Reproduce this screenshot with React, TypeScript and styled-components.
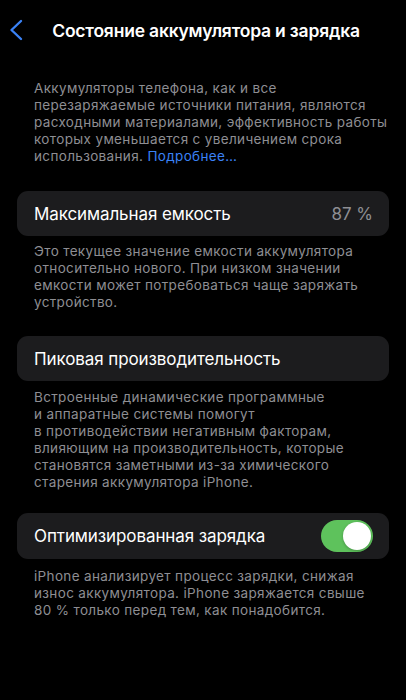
import styled, { createGlobalStyle } from "styled-components";

const GlobalStyle = createGlobalStyle`
  html, body {
    margin: 0;
    padding: 0;
    background: #000;
  }
  body {
    font-family: Inter, "Noto Sans", "DejaVu Sans", sans-serif;
    -webkit-font-smoothing: antialiased;
  }
`;

const Screen = styled.div`
  width: 406px;
  min-height: 700px;
  background: #000;
  color: #fff;
  display: flex;
  flex-direction: column;
`;

const NavBar = styled.header`
  display: grid;
  grid-template-columns: 50px 1fr 44px;
  align-items: center;
  height: 60px;
`;

const BackButton = styled.button`
  display: flex;
  align-items: center;
  justify-content: flex-start;
  padding: 0 0 0 9px;
  background: none;
  border: 0;
  height: 44px;
  cursor: pointer;
`;

const NavTitle = styled.h1`
  margin: 0;
  text-align: center;
  font-size: 17.5px;
  font-weight: 600;
  letter-spacing: -0.2px;
  color: #fff;
  white-space: nowrap;
`;

const Content = styled.main`
  display: flex;
  flex-direction: column;
  padding: 0 17px;
`;

const Note = styled.p<{ $top: number; $bottom: number }>`
  margin: ${(p) => p.$top}px 0 ${(p) => p.$bottom}px;
  padding: 0 17px;
  font-size: 13.5px;
  line-height: 17px;
  color: #8e8e93;
  letter-spacing: 0.35px;
`;

const Line = styled.span`
  display: block;
  white-space: nowrap;
`;

const Link = styled.a`
  color: #3a82f6;
  text-decoration: none;
`;

const Card = styled.div<{ $height: number }>`
  display: flex;
  align-items: center;
  justify-content: space-between;
  height: ${(p) => p.$height}px;
  padding: 0 16px 0 17px;
  background: #1c1c1e;
  border-radius: 11px;
`;

const Label = styled.span`
  font-size: 17px;
  color: #fff;
  letter-spacing: -0.1px;
`;

const Value = styled.span`
  font-size: 17px;
  color: #8e8e93;
`;

const Toggle = styled.span<{ $on: boolean }>`
  position: relative;
  width: 52px;
  height: 32px;
  border-radius: 16px;
  background: ${(p) => (p.$on ? "#5ec25c" : "#39393d")};
  &::after {
    content: "";
    position: absolute;
    top: 2px;
    left: ${(p) => (p.$on ? "22px" : "2px")};
    width: 28px;
    height: 28px;
    border-radius: 50%;
    background: #fff;
    box-shadow: 0 1px 3px rgba(0, 0, 0, 0.25);
  }
`;

function Chevron() {
  return (
    <svg width="14" height="22" viewBox="0 0 14 22">
      <polyline
        points="12,2 2.5,11 12,20"
        fill="none"
        stroke="#3a82f6"
        strokeWidth="2.4"
        strokeLinecap="round"
        strokeLinejoin="round"
      />
    </svg>
  );
}

const intro = [
  "Аккумуляторы телефона, как и все",
  "перезаряжаемые источники питания, являются",
  "расходными материалами, эффективность работы",
  "которых уменьшается с увеличением срока",
];

const capacityNote = [
  "Это текущее значение емкости аккумулятора",
  "относительно нового. При низком значении",
  "емкости может потребоваться чаще заряжать",
  "устройство.",
];

const performanceNote = [
  "Встроенные динамические программные",
  "и аппаратные системы помогут",
  "в противодействии негативным факторам,",
  "влияющим на производительность, которые",
  "становятся заметными из-за химического",
  "старения аккумулятора iPhone.",
];

const chargingNote = [
  "iPhone анализирует процесс зарядки, снижая",
  "износ аккумулятора. iPhone заряжается свыше",
  "80 % только перед тем, как понадобится.",
];

function Lines({ items }: { items: string[] }) {
  return (
    <>
      {items.map((t) => (
        <Line key={t}>{t}</Line>
      ))}
    </>
  );
}

export default function App() {
  return (
    <>
      <GlobalStyle />
      <Screen>
        <NavBar>
          <BackButton aria-label="Назад">
            <Chevron />
          </BackButton>
          <NavTitle>Состояние аккумулятора и зарядка</NavTitle>
          <span />
        </NavBar>
        <Content>
          <Note $top={20} $bottom={26}>
            <Lines items={intro} />
            <Line>
              использования. <Link href="#">Подробнее…</Link>
            </Line>
          </Note>
          <Card $height={45}>
            <Label>Максимальная емкость</Label>
            <Value>87 %</Value>
          </Card>
          <Note $top={7} $bottom={25}>
            <Lines items={capacityNote} />
          </Note>
          <Card $height={45}>
            <Label>Пиковая производительность</Label>
          </Card>
          <Note $top={8} $bottom={22}>
            <Lines items={performanceNote} />
          </Note>
          <Card $height={46}>
            <Label>Оптимизированная зарядка</Label>
            <Toggle $on role="switch" aria-checked="true" />
          </Card>
          <Note $top={9} $bottom={0}>
            <Lines items={chargingNote} />
          </Note>
        </Content>
      </Screen>
    </>
  );
}
